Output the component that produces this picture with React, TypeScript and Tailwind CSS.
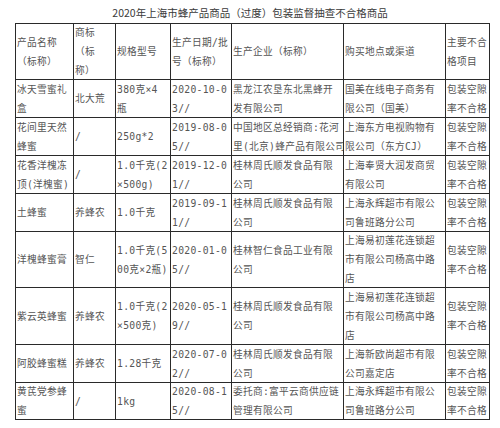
import React from 'react';

const header = [
  ['产品名称', '（标称）'],
  ['商标', '（标', '称）'],
  ['规格型号'],
  ['生产日期/批', '号（标称）'],
  ['生产企业（标称）'],
  ['购买地点或渠道'],
  ['主要不合', '格项目'],
];

const fail = ['包装空隙', '率不合格'];

const rows: string[][][] = [
  [['冰天雪蜜礼', '盒'], ['北大荒'], ['380克×4', '瓶'], ['2020-10-0', '3//'], ['黑龙江农垦东北黑蜂开', '发有限公司'], ['国美在线电子商务有', '限公司（国美）'], fail],
  [['花间里天然', '蜂蜜'], ['/'], ['250g*2'], ['2019-08-0', '5//'], ['中国地区总经销商:花河', '里(北京)蜂产品有限公司'], ['上海东方电视购物有', '限公司（东方CJ）'], fail],
  [['花香洋槐冻', '顶(洋槐蜜)'], ['/'], ['1.0千克(2', '×500g)'], ['2019-12-0', '1//'], ['桂林周氏顺发食品有限', '公司'], ['上海奉贤大润发商贸', '有限公司'], fail],
  [['土蜂蜜'], ['养蜂农'], ['1.0千克'], ['2019-09-1', '1//'], ['桂林周氏顺发食品有限', '公司'], ['上海永辉超市有限公', '司鲁班路分公司'], fail],
  [['洋槐蜂蜜膏'], ['智仁'], ['1.0千克(5', '00克×2瓶)'], ['2020-01-0', '5//'], ['桂林智仁食品工业有限', '公司'], ['上海易初莲花连锁超', '市有限公司杨高中路', '店'], fail],
  [['紫云英蜂蜜'], ['养蜂农'], ['1.0千克(2', '×500克)'], ['2020-05-1', '9//'], ['桂林周氏顺发食品有限', '公司'], ['上海易初莲花连锁超', '市有限公司杨高中路', '店'], fail],
  [['阿胶蜂蜜糕'], ['养蜂农'], ['1.28千克'], ['2020-07-0', '2//'], ['桂林周氏顺发食品有限', '公司'], ['上海新欧尚超市有限', '公司嘉定店'], fail],
  [['黄芪党参蜂', '蜜'], ['/'], ['1kg'], ['2020-08-1', '5//'], ['委托商:富平云商供应链', '管理有限公司'], ['上海永辉超市有限公', '司鲁班路分公司'], fail],
];

function Cell({ lines }: { lines: string[] }) {
  return (
    <div className="flex flex-col justify-center overflow-hidden border-r border-b border-[#2a2a2a] pl-[1px]">
      {lines.map((l, i) => (
        <div key={i} className="whitespace-nowrap leading-[19px]">
          {l}
        </div>
      ))}
    </div>
  );
}

export default function App() {
  return (
    <div className="h-[428px] w-[500px] overflow-hidden bg-white text-[#555]">
      <div
        className="h-[23px] pt-[6px] text-center text-[10.5px] leading-[14px] text-[#3a3a3a]"
        style={{ fontFamily: '"Noto Sans CJK SC", sans-serif' }}
      >
        2020年上海市蜂产品商品（过度）包装监督抽查不合格商品
      </div>
      <div
        className="ml-[15px] grid w-[475px] grid-cols-[58px_42px_55px_61px_112px_102px_44px] grid-rows-[56px_38px_38px_38px_38px_56px_57px_38px_37px] border-t border-l border-[#2a2a2a] text-[9.7px] tracking-[0.3px]"
        style={{ fontFamily: '"DejaVu Sans Mono", "Noto Sans CJK SC", monospace' }}
      >
        {header.map((c, i) => (
          <Cell key={i} lines={c} />
        ))}
        {rows.map((r, i) => r.map((c, j) => <Cell key={`${i}-${j}`} lines={c} />))}
      </div>
    </div>
  );
}
